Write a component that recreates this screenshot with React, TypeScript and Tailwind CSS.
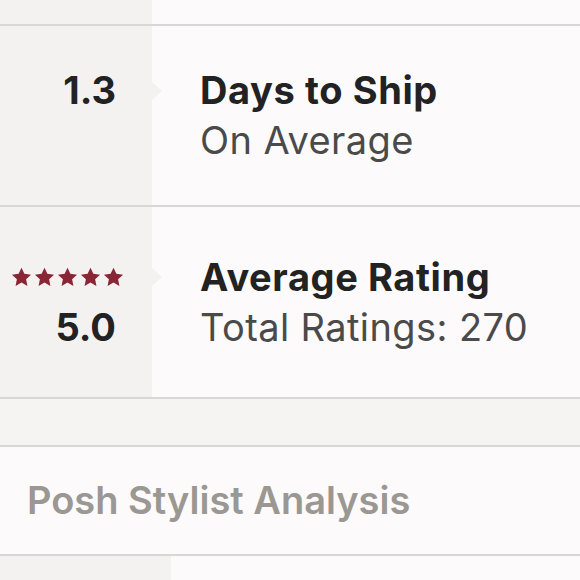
const LEFT = "bg-[#f4f2f0]";
const RIGHT = "bg-[#fcfafb]";

function Star() {
  return (
    <svg width="21" height="20" viewBox="0 0 24 23" className="block">
      <path
        d="M12 0.8l3.3 7.1 7.7 0.9-5.7 5.3 1.5 7.7L12 17.9l-6.8 3.9 1.5-7.7L1 8.8l7.7-0.9z"
        fill="#8a2535"
      />
    </svg>
  );
}

function Arrow() {
  return (
    <span className="absolute left-[-48px] top-1/2 -translate-y-1/2 w-0 h-0 border-y-[9px] border-y-transparent border-l-[10px] border-l-[#f4f2f0]" />
  );
}

function StatRow({
  height,
  top,
  bottom,
  title,
  sub,
}: {
  height: string;
  top: React.ReactNode;
  bottom?: React.ReactNode;
  title: string;
  sub: string;
}) {
  return (
    <div className={`flex ${height} border-b-2 border-[#d9d7d6]`}>
      <div className={`w-[152px] ${LEFT} flex flex-col items-end justify-center pr-[36px]`}>
        <div className="h-[50px] flex items-center">{top}</div>
        <div className="h-[50px] flex items-center">{bottom}</div>
      </div>
      <div className={`flex-1 ${RIGHT} flex flex-col justify-center pl-[48px]`}>
        <div className="relative h-[50px] flex items-center text-[38px] font-bold text-[#222] tracking-[0.6px]">
          <Arrow />
          {title}
        </div>
        <div className="h-[50px] flex items-center text-[38px] text-[#4a4a4a] tracking-[0.4px]">{sub}</div>
      </div>
    </div>
  );
}

const NUM = "text-[38px] font-bold text-[#222]";

export default function App() {
  return (
    <div className="w-[580px] h-[580px] overflow-hidden font-['Inter',sans-serif]">
      <div className="flex h-[26px] border-b-2 border-[#d9d7d6]">
        <div className={`w-[152px] ${LEFT}`} />
        <div className={`flex-1 ${RIGHT}`} />
      </div>
      <StatRow
        height="h-[181px]"
        top={<span className={NUM}>1.3</span>}
        title="Days to Ship"
        sub="On Average"
      />
      <StatRow
        height="h-[192px]"
        top={
          <div className="flex gap-[2px] mr-[-8px]">
            <Star />
            <Star />
            <Star />
            <Star />
            <Star />
          </div>
        }
        bottom={<span className={NUM}>5.0</span>}
        title="Average Rating"
        sub="Total Ratings: 270"
      />
      <div className="h-[48px] bg-[#f5f4f2] border-b-2 border-[#d9d7d6]" />
      <div className={`h-[109px] ${RIGHT} border-b-2 border-[#d9d7d6] flex items-center pl-[27px]`}>
        <div className="text-[38px] font-semibold text-[#9b9792]">Posh Stylist Analysis</div>
      </div>
      <div className="flex h-[24px]">
        <div className={`w-[171px] ${LEFT}`} />
        <div className={`flex-1 ${RIGHT}`} />
      </div>
    </div>
  );
}
